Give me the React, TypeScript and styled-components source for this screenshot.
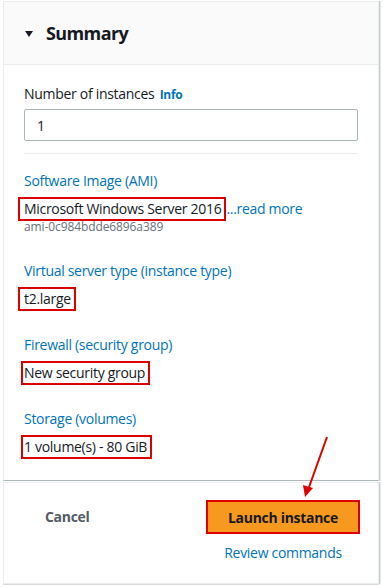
import React from 'react';
import styled, { createGlobalStyle } from 'styled-components';

const GlobalStyle = createGlobalStyle`
    html, body {
        margin: 0;
        padding: 0;
        background: #ffffff;
    }
    body {
        font-family: 'Open Sans', 'Noto Sans', sans-serif;
        color: #16191f;
        letter-spacing: -0.3px;
    }
`;

interface Field {
    label: string;
    value: string;
    inset: number;
    extra?: string;
    note?: string;
}

const fields: Array<Field> = [
    { label: 'Software Image (AMI)', value: 'Microsoft Windows Server 2016', inset: 6, extra: '...read more', note: 'ami-0c984bdde6896a389' },
    { label: 'Virtual server type (instance type)', value: 't2.large', inset: 6 },
    { label: 'Firewall (security group)', value: 'New security group', inset: 3 },
    { label: 'Storage (volumes)', value: '1 volume(s) - 80 GiB', inset: 3 },
];

function App() {
    return (
        <Page>
            <GlobalStyle />
            <Card>
                <Header>
                    <Caret />
                    <Title>Summary</Title>
                </Header>
                <Body>
                    <InstanceLabel>
                        Number of instances <InfoLink>Info</InfoLink>
                    </InstanceLabel>
                    <CountInput value="1" readOnly />
                    <Divider />
                    {fields.map(f => (
                        <FieldBlock key={f.label}>
                            <FieldLabel>{f.label}</FieldLabel>
                            <ValueRow>
                                <Marked $inset={f.inset}>{f.value}</Marked>
                                {f.extra && <ReadMore>{f.extra}</ReadMore>}
                            </ValueRow>
                            {f.note && <Note>{f.note}</Note>}
                        </FieldBlock>
                    ))}
                </Body>
            </Card>
            <Footer>
                <CancelButton>Cancel</CancelButton>
                <Actions>
                    <LaunchButton>Launch instance</LaunchButton>
                    <ReviewLink>Review commands</ReviewLink>
                </Actions>
            </Footer>
            <Arrow width="40" height="70" viewBox="0 0 40 70">
                <line x1="32" y1="2" x2="13" y2="55" stroke="#dc0000" strokeWidth="2" />
                <polygon points="10,62 8,50 18,53" fill="#dc0000" />
            </Arrow>
        </Page>
    );
}

export default App;

const Page = styled.div`
    position: relative;
    width: 383px;
    height: 587px;
    padding: 1px 4px 0 3px;
    box-sizing: border-box;
`;

const Card = styled.div`
    background: #ffffff;
    border: 1px solid #eaeded;
    border-bottom: 1px solid #aab7b8;
    box-shadow: 1px 0 0 0 #c8cfd0, 2px 0 0 0 #e4e8e8;
    height: 480px;
    box-sizing: border-box;
    display: flex;
    flex-direction: column;
`;

const Header = styled.div`
    height: 63px;
    background: #fafafa;
    border-bottom: 1px solid #eaeded;
    display: flex;
    align-items: center;
    padding-left: 21px;
    box-sizing: border-box;
    gap: 13px;
`;

const Caret = styled.span`
    width: 0;
    height: 0;
    border-left: 4px solid transparent;
    border-right: 4px solid transparent;
    border-top: 6px solid #16191f;
    margin-top: 1px;
`;

const Title = styled.h2`
    margin: 0;
    font-size: 18px;
    font-weight: 700;
    color: #16191f;
    letter-spacing: -0.6px;
`;

const Body = styled.div`
    padding: 19px 20px 0 20px;
    display: flex;
    flex-direction: column;
`;

const InstanceLabel = styled.div`
    font-size: 14px;
    line-height: 20px;
    color: #16191f;
`;

const InfoLink = styled.span`
    font-size: 12px;
    font-weight: 700;
    color: #0073bb;
    margin-left: 2px;
`;

const CountInput = styled.input`
    margin-top: 4px;
    height: 32px;
    box-sizing: border-box;
    border: 1px solid #aab7b8;
    border-radius: 2px;
    padding: 0 12px;
    font-family: 'Open Sans', 'Noto Sans', sans-serif;
    font-size: 14px;
    color: #16191f;
    outline: none;
`;

const Divider = styled.div`
    margin-top: 12px;
    border-top: 1px solid #eaeded;
`;

const FieldBlock = styled.div`
    display: flex;
    flex-direction: column;
    margin-top: 17px;
    & + & {
        margin-top: 26px;
    }
`;

const FieldLabel = styled.div`
    font-size: 14px;
    line-height: 20px;
    color: #0073bb;
`;

const ValueRow = styled.div`
    margin-top: 8px;
    display: flex;
    align-items: center;
    font-size: 14px;
    line-height: 20px;
`;

const Marked = styled.span<{ $inset: number }>`
    display: inline-block;
    border: 2px solid #dc0000;
    margin: -2px 0 -2px ${p => -p.$inset}px;
    padding: 0 3px 0 ${p => p.$inset - 2}px;
    color: #16191f;
    white-space: nowrap;
`;

const ReadMore = styled.span`
    color: #0073bb;
    white-space: nowrap;
`;

const Note = styled.div`
    font-size: 12px;
    line-height: 16px;
    color: #687078;
    letter-spacing: -0.1px;
`;

const Footer = styled.div`
    height: 102px;
    margin-top: 1px;
    background: #ffffff;
    border: 1px solid #eaeded;
    box-shadow: 1px 0 0 0 #c8cfd0, 2px 0 0 0 #e4e8e8, 0 1px 0 0 #d5dbdb;
    box-sizing: border-box;
    display: flex;
    justify-content: space-between;
    align-items: flex-start;
    padding: 17px 18px 0 41px;
`;

const CancelButton = styled.span`
    margin-top: 7px;
    font-size: 14px;
    line-height: 20px;
    font-weight: 700;
    color: #545b64;
`;

const Actions = styled.div`
    display: flex;
    flex-direction: column;
    align-items: center;
    gap: 9px;
`;

const LaunchButton = styled.div`
    width: 154px;
    height: 34px;
    box-sizing: border-box;
    background: #f8991f;
    border: 2px solid #dc0000;
    display: flex;
    align-items: center;
    justify-content: center;
    font-size: 14px;
    font-weight: 700;
    color: #16191f;
`;

const ReviewLink = styled.span`
    font-size: 14px;
    line-height: 20px;
    color: #0073bb;
`;

const Arrow = styled.svg`
    position: absolute;
    left: 295px;
    top: 435px;
`;
